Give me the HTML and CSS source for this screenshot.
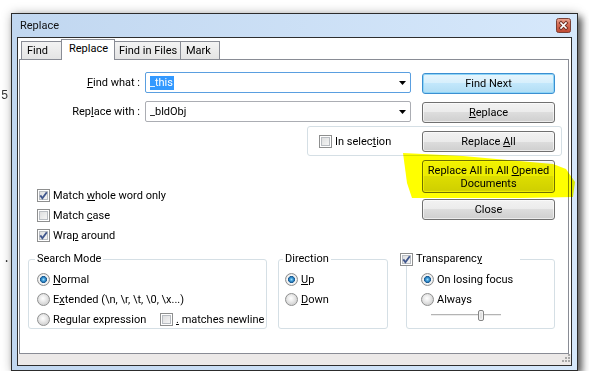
FILE: index.html
```html
<!DOCTYPE html>
<html lang="en">
  <head>
    <meta charset="UTF-8" />
    <title>Replace</title>
    <link rel="stylesheet" href="styles.css">
  </head>
  <body>
    <span class="behind behind-five">5</span>
    <span class="behind behind-dot">.</span>

    <div class="window">
      <div class="titlebar">
        <span class="title">Replace</span>
        <span class="close-btn">
          <svg width="15" height="15" viewBox="0 0 15 15">
            <defs>
              <linearGradient id="closeFill" x1="0" y1="0" x2="0" y2="1">
                <stop offset="0" stop-color="#eba894" />
                <stop offset="0.45" stop-color="#d66a52" />
                <stop offset="1" stop-color="#c04a33" />
              </linearGradient>
            </defs>
            <rect x="0.5" y="0.5" width="14" height="14" rx="2" fill="url(#closeFill)" stroke="#7a4036" />
            <path d="M5 5 L10 10 M10 5 L5 10" stroke="#6e2e24" stroke-width="3.4" stroke-linecap="square" />
            <path d="M5 5 L10 10 M10 5 L5 10" stroke="#fff" stroke-width="1.6" stroke-linecap="square" />
          </svg>
        </span>
      </div>

      <div class="client">
        <ul class="tabs">
          <li class="tab tab-find">Find</li>
          <li class="tab tab-replace active">Replace</li>
          <li class="tab tab-files">Find in Files</li>
          <li class="tab tab-mark">Mark</li>
        </ul>

        <div class="tab-panel">
          <div class="field-row">
            <label class="field-label"><u>F</u>ind what :</label>
            <div class="combo focused">
              <span class="combo-text"><span class="selected-text">_this</span></span>
              <svg class="arrow" width="7" height="4" viewBox="0 0 7 4"><polygon points="0,0 7,0 3.5,4" fill="#000" /></svg>
            </div>
            <button class="btn default">Find Next</button>
          </div>

          <div class="field-row second">
            <label class="field-label">Rep<u>l</u>ace with :</label>
            <div class="combo">
              <span class="combo-text">_bldObj</span>
              <svg class="arrow" width="7" height="4" viewBox="0 0 7 4"><polygon points="0,0 7,0 3.5,4" fill="#000" /></svg>
            </div>
            <button class="btn"><u>R</u>eplace</button>
          </div>

          <div class="selection-box">
            <label class="check"><span class="box"></span><span>In selec<u>t</u>ion</span></label>
            <button class="btn">Replace <u>A</u>ll</button>
          </div>

          <div class="lower">
            <div class="options">
              <label class="check">
                <span class="box"><svg width="11" height="11" viewBox="0 0 11 11"><path d="M2.3 5.4 L4.4 8.2 L8.8 2.2" fill="none" stroke="#41578d" stroke-width="1.9" /></svg></span>
                <span>Match <u>w</u>hole word only</span>
              </label>
              <label class="check"><span class="box"></span><span>Match <u>c</u>ase</span></label>
              <label class="check">
                <span class="box"><svg width="11" height="11" viewBox="0 0 11 11"><path d="M2.3 5.4 L4.4 8.2 L8.8 2.2" fill="none" stroke="#41578d" stroke-width="1.9" /></svg></span>
                <span>Wra<u>p</u> around</span>
              </label>
            </div>
            <div class="buttons">
              <button class="btn tall">Replace All in All <u>O</u>pened<br>Documents</button>
              <button class="btn close">Close</button>
            </div>
            <div class="highlighter"></div>
          </div>

          <div class="groups">
            <fieldset class="group search-mode">
              <legend>Search Mode</legend>
              <label class="radio"><span class="dot on"></span><span><u>N</u>ormal</span></label>
              <label class="radio">
                <span class="dot"></span><span>E<u>x</u>tended (\n, \r, \t, \0, \x...)</span>
              </label>
              <div class="radio-row">
                <label class="radio regex"><span class="dot"></span><span>Re<u>g</u>ular expression</span></label>
                <label class="check"><span class="box"></span><span><u>.</u> matches newline</span></label>
              </div>
            </fieldset>

            <fieldset class="group direction">
              <legend>Direction</legend>
              <label class="radio"><span class="dot on"></span><span><u>U</u>p</span></label>
              <label class="radio"><span class="dot"></span><span><u>D</u>own</span></label>
            </fieldset>

            <fieldset class="group transparency">
              <legend>
                <label class="check">
                  <span class="box"><svg width="11" height="11" viewBox="0 0 11 11"><path d="M2.3 5.4 L4.4 8.2 L8.8 2.2" fill="none" stroke="#41578d" stroke-width="1.9" /></svg></span>
                  <span>Transparenc<u>y</u></span>
                </label>
              </legend>
              <label class="radio"><span class="dot on"></span><span>On losing focus</span></label>
              <label class="radio"><span class="dot"></span><span>Always</span></label>
              <svg class="slider" width="70" height="11" viewBox="0 0 70 11">
                <line x1="0" y1="4.5" x2="70" y2="4.5" stroke="#b4b4b4" />
                <line x1="0" y1="5.5" x2="70" y2="5.5" stroke="#ececec" />
                <rect x="47.5" y="0.5" width="5" height="10" rx="1.5" fill="#f2f2f2" stroke="#858585" />
                <line x1="50" y1="2.5" x2="50" y2="8.5" stroke="#cfcfcf" />
              </svg>
            </fieldset>
          </div>
        </div>

        <div class="status-strip">
          <svg class="grip" width="8" height="8" viewBox="0 0 8 8">
            <rect x="6" y="0" width="2" height="2" fill="#a8a8a8" />
            <rect x="3" y="3" width="2" height="2" fill="#a8a8a8" />
            <rect x="6" y="3" width="2" height="2" fill="#a8a8a8" />
            <rect x="0" y="6" width="2" height="2" fill="#a8a8a8" />
            <rect x="3" y="6" width="2" height="2" fill="#a8a8a8" />
            <rect x="6" y="6" width="2" height="2" fill="#a8a8a8" />
          </svg>
        </div>
      </div>
    </div>
  </body>
</html>
```

FILE: styles.css
```css
/* Notepad++ style Replace dialog, Windows 7 basic look */

body {
  margin: 0;
  padding: 13px 0 0 11px;
  background-color: #fff;
  font-family: Roboto, "Noto Sans", sans-serif;
  font-size: 11px;
  color: #000;
}

u {
  text-decoration: underline;
  text-underline-offset: 1px;
}

.behind {
  position: absolute;
  font-family: "Liberation Mono", monospace;
  font-size: 12px;
  color: #333;
}

.behind-five {
  left: 1px;
  top: 89px;
}

.behind-dot {
  left: 3px;
  top: 252px;
}

/* window frame */

.window {
  width: 555px;
  padding: 0 5px 4px;
  border: 1px solid #2c2c2c;
  background: linear-gradient(to right, #c1d7f0, #d6e8fb);
  box-shadow: 4px 4px 7px rgba(0, 0, 0, 0.6), 0 0 10px rgba(0, 0, 0, 0.22);
}

.titlebar {
  height: 23px;
  display: flex;
  align-items: center;
  justify-content: space-between;
  padding: 0 1px 0 3px;
}

.title {
  color: #111;
}

.close-btn svg {
  display: block;
}

.client {
  height: 327px;
  border: 1px solid #2e2e2e;
  background-color: #fff;
  display: flex;
  flex-direction: column;
}

/* tabs */

.tabs {
  list-style: none;
  margin: 0;
  padding: 0 0 0 3px;
  height: 21px;
  display: flex;
  align-items: flex-end;
}

.tab {
  box-sizing: border-box;
  height: 18px;
  padding: 1px 0 0 5px;
  line-height: 16px;
  border: 1px solid #898c95;
  border-bottom: none;
  background: linear-gradient(#f3f3f3, #e4e4e4);
  margin-left: -1px;
}

.tab-find {
  width: 41px;
  margin-left: 0;
}

.tab-replace {
  width: 54px;
}

.tab-files {
  width: 67px;
  padding-left: 4px;
}

.tab-mark {
  width: 40px;
  padding-left: 5px;
}

.tab.active {
  position: relative;
  z-index: 1;
  height: 21px;
  margin-bottom: -1px;
  padding: 0 0 0 7px;
  line-height: 17px;
  background: #fff;
}

.tab-panel {
  height: 281px;
  margin: 0 2px 0 1px;
  padding-top: 12px;
  box-sizing: content-box;
  border: 1px solid #898c95;
  background-color: #fff;
}

/* find / replace fields */

.field-row {
  display: flex;
  align-items: flex-start;
}

.field-row.second {
  margin-top: 7px;
}

.field-label {
  width: 120px;
  line-height: 21px;
  text-align: right;
  white-space: nowrap;
}

.combo {
  box-sizing: border-box;
  width: 266px;
  height: 21px;
  margin-left: 5px;
  padding: 0 4px;
  display: flex;
  align-items: center;
  border: 1px solid #abadb3;
  border-radius: 2px;
  background-color: #fff;
}

.combo.focused {
  border-color: #5a9fe0;
}

.combo-text {
  flex: 1;
  line-height: 14px;
}

.selected-text {
  display: inline-block;
  padding-right: 1px;
  background-color: #3399ff;
  color: #fff;
}

.arrow {
  display: block;
}

/* buttons */

.btn {
  display: block;
  box-sizing: border-box;
  width: 133px;
  height: 21px;
  margin: 1px 0 0 11px;
  padding: 0;
  font: inherit;
  line-height: 13px;
  color: #000;
  border: 1px solid #707070;
  border-radius: 3px;
  background: linear-gradient(#f2f2f2, #ebebeb 50%, #dddddd 50%, #cfcfcf);
  box-shadow: inset 0 0 0 1px rgba(255, 255, 255, 0.6);
}

.btn.default {
  border-color: #3b8fd1;
  background: linear-gradient(#e6f5fd, #d6effc 50%, #c2e7fb 50%, #b1ddf4);
  box-shadow: inset 0 0 0 1px #8ed5f7;
}

.selection-box {
  box-sizing: border-box;
  width: 255px;
  height: 30px;
  margin: 3px 0 0 287px;
  padding: 4px 6px 3px 11px;
  display: flex;
  align-items: center;
  justify-content: space-between;
  border: 1px solid #d5dfe5;
  border-radius: 3px;
}

.selection-box .btn {
  margin: 0;
}

.lower {
  position: relative;
  display: flex;
}

.options {
  box-sizing: border-box;
  width: 402px;
  padding: 29px 0 0 17px;
}

.buttons .btn {
  margin: 0;
}

.buttons .tall {
  height: 33px;
  margin-top: 4px;
}

.buttons .close {
  margin-top: 6px;
}

/* marker stroke drawn over the screenshot */
.highlighter {
  position: absolute;
  left: 383px;
  top: -3px;
  width: 172px;
  height: 46px;
  background-color: #ffff00;
  mix-blend-mode: multiply;
  pointer-events: none;
  clip-path: polygon(0 0, 60px 3px, 150px 11px, 163px 16px, 172px 29px, 170px 44px, 118px 45px, 9px 45px, 4px 30px);
}

/* check boxes and radio buttons */

.check,
.radio {
  display: flex;
  align-items: center;
  height: 20px;
  white-space: nowrap;
}

.box {
  flex: none;
  box-sizing: border-box;
  width: 13px;
  height: 13px;
  margin-right: 3px;
  border: 1px solid #8e8f8f;
  background: linear-gradient(135deg, #d8d9da, #fbfbfb);
  box-shadow: inset 0 0 0 1px #fff, inset 0 0 0 2px #b9bdc2;
}

.box svg {
  display: block;
}

.dot {
  flex: none;
  box-sizing: border-box;
  width: 13px;
  height: 13px;
  margin-right: 3px;
  border: 1px solid #8e8f8f;
  border-radius: 50%;
  background: radial-gradient(circle at 45% 40%, #fff 0, #ececec 3px, #d6d6d6 6px);
}

.dot.on {
  background: radial-gradient(circle at 50% 50%, #9ce0fa 0, #3d9ad8 1.6px, #1a5a92 3.2px, #f8f8f8 3.8px, #ececec 5px, #d4d4d4 6px);
}

/* group boxes */

.groups {
  display: flex;
  align-items: flex-start;
  margin-top: 7px;
  padding-left: 8px;
}

.group {
  box-sizing: border-box;
  height: 77px;
  min-width: 0;
  margin: 0;
  padding: 3px 0 0 8px;
  border: 1px solid #d5dfe5;
  border-radius: 3px;
}

.group legend {
  margin-left: -2px;
  padding: 0 2px;
  line-height: 14px;
}

.search-mode {
  width: 239px;
}

.direction {
  width: 110px;
  margin-left: 11px;
  padding-left: 6px;
}

.transparency {
  width: 149px;
  margin-left: 18px;
  padding-left: 14px;
}

.transparency legend {
  width: 120px;
  margin-left: -21px;
  padding: 0;
}

.transparency legend .check {
  height: 14px;
  background-color: #fff;
}

.radio-row {
  display: flex;
}

.regex {
  width: 123px;
}

.slider {
  display: block;
  margin: 1px 0 0 10px;
}

/* bottom strip with size grip */

.status-strip {
  flex: 1;
  display: flex;
  justify-content: flex-end;
  align-items: flex-end;
  padding: 0 1px 3px 0;
  background-color: #ece9e8;
}

.grip {
  display: block;
}
```
